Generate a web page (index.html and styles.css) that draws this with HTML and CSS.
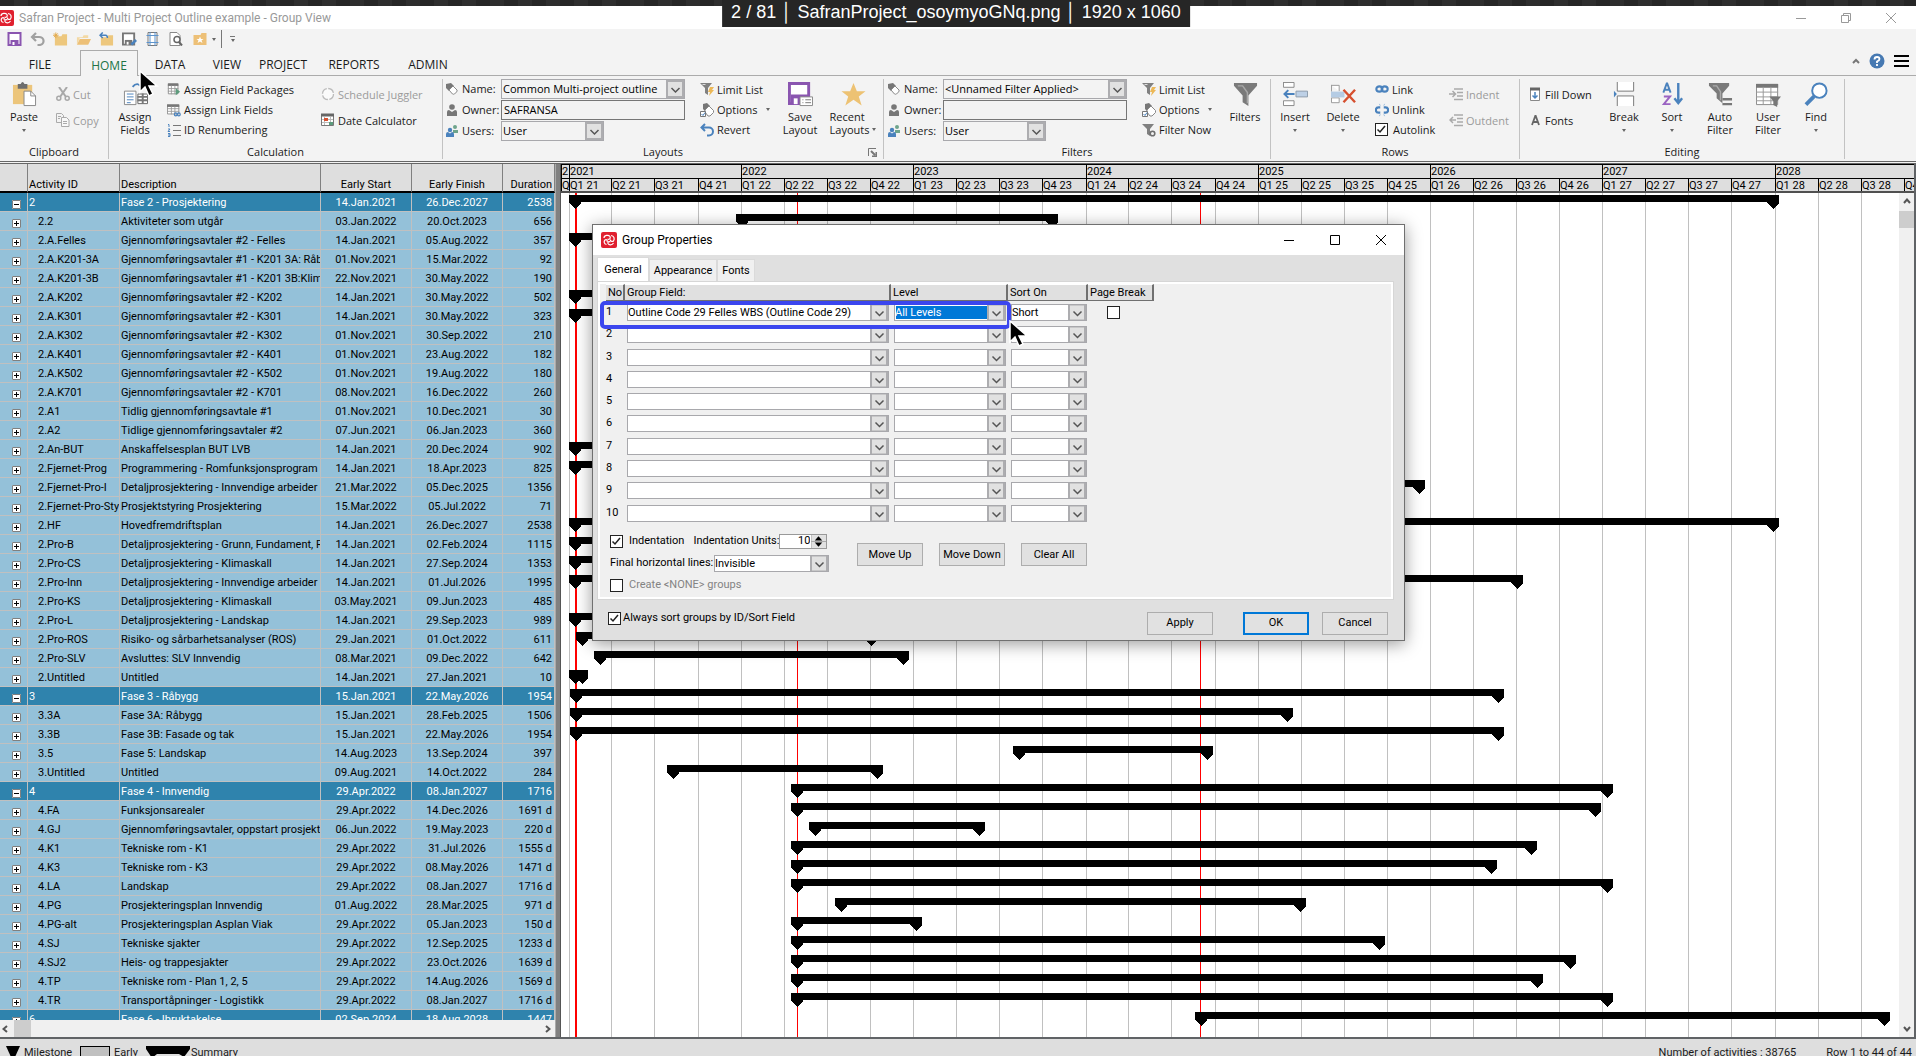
FILE: index.html
```html
<!DOCTYPE html>
<html lang="en">
<head>
<meta charset="utf-8">
<title>Safran Project - Multi Project Outline example - Group View</title>
<link rel="stylesheet" href="styles.css">
</head>
<body>
<svg class="sprite" aria-hidden="true">
  <symbol id="logo" viewBox="0 0 16 16"><rect width="16" height="16" rx="2" fill="#e0202f"/><g fill="none" stroke="#fff" stroke-width="1.200"><path d="M3 6C3 3 7.500 2.500 9 4.500C10 6.500 8 8 6.500 7"/><path d="M10 3.500C13 4 14 6.500 12.500 9C11 10 9 9 9.500 7.500"/><path d="M12.500 11C11 13.500 8 13.500 7 11.500C6.500 10 8 9 9.500 10"/><path d="M5.500 12.500C3 12 2.500 9.500 4 8C5.500 7 7 8.500 6 10"/></g></symbol>
  <symbol id="save" viewBox="0 0 14 14"><path d="M1 1h12v12H1z" fill="#fff" stroke="#8a55b0" stroke-width="2"/><path d="M3 8h8v5H3z" fill="#8a55b0"/><path d="M5 10h2v3H5z" fill="#fff"/></symbol>
  <symbol id="undo" viewBox="0 0 14 14"><path d="M5.500 1L1.500 5l4 4M2 5h6.500a4 3.500 0 0 1 0 8H7" fill="none" stroke="#a0a0a0" stroke-width="2.200"/></symbol>
  <symbol id="folder-new" viewBox="0 0 16 14"><path d="M2 4h7l1-2h5v12H2z" fill="#edc77d"/><path d="M3 0v6M0 3h6M1 1l4 4M5 1L1 5" stroke="#e2a94a"/></symbol>
  <symbol id="folder-open" viewBox="0 0 16 14"><path d="M1 13V5h6l1-2h5v3H4z" fill="#f3d9a4"/><path d="M4 7h12l-3 6H1z" fill="#edc077"/></symbol>
  <symbol id="folder-back" viewBox="0 0 16 14"><path d="M2 5h7l1-2h5v11H2z" fill="#edc77d"/><path d="M4 0L1 3l3 3M1 3h6q2 0 2 3" fill="none" stroke="#4a82bd" stroke-width="1.600"/></symbol>
  <symbol id="save-as" viewBox="0 0 16 14"><path d="M1 1h12v12H1z" fill="#fff" stroke="#767676" stroke-width="2"/><path d="M3 8h8v5H3z" fill="#767676"/><path d="M5 10h2v3H5z" fill="#fff"/><path d="M9 12l5-5 2 2-5 5z" fill="#4a82bd"/></symbol>
  <symbol id="page-setup" viewBox="0 0 14 14"><path d="M2.500.5h9v13h-9z" fill="#fff" stroke="#777"/><path d="M4.500 0v14M9.500 0v14M1 3.500h12M1 10.500h12" stroke="#5c93cc"/></symbol>
  <symbol id="preview" viewBox="0 0 14 14"><path d="M1.500.5h7l3 3v10h-10z" fill="#fff" stroke="#888"/><circle cx="8.500" cy="7.500" r="3" fill="#fff" stroke="#666" stroke-width="1.500"/><path d="M10.500 10l3 3.500" stroke="#666" stroke-width="2"/></symbol>
  <symbol id="folder-star" viewBox="0 0 14 14"><path d="M0 3h7l1-2h5v12H0z" fill="#edc077"/><path d="M6.500 4.500l1 2.500h2.500l-2 1.500 1 2.500-2.500-1.500L4 11l1-2.500L3 7h2.500z" fill="#fff"/></symbol>
  <symbol id="paste" viewBox="0 0 26 26"><path d="M1 3h20v20H1z" fill="#ecc57b"/><path d="M6 2h3q2-4 4 0h3v5H6z" fill="#6e6e6e"/><path d="M12.500 9.500h7l5 5v10h-12z" fill="#fff" stroke="#888"/><path d="M19.500 9.500v5h5" fill="none" stroke="#888"/></symbol>
  <symbol id="cut" viewBox="0 0 14 14"><path d="M3 0l7 10M11 0L4 10" stroke="#a8a8a8" stroke-width="2"/><circle cx="2.800" cy="11.200" r="2" fill="none" stroke="#a8a8a8" stroke-width="1.500"/><circle cx="11.200" cy="11.200" r="2" fill="none" stroke="#a8a8a8" stroke-width="1.500"/></symbol>
  <symbol id="copy" viewBox="0 0 14 14"><path d="M.5.500h5l2 2v7h-7z" fill="#f3f3f3" stroke="#aaa"/><path d="M5.500 4.500h5l2.500 2.500v6.500H5.500z" fill="#f8f8f8" stroke="#aaa"/><path d="M2 3.500h3M2 5.500h2M7 8.500h4M7 10.500h4" stroke="#aaa"/></symbol>
  <symbol id="assign" viewBox="0 0 26 26"><path d="M1.500 9.500h12v14h-12z" fill="#fff" stroke="#888"/><path d="M4 12.500h7M4 15.500h7M4 18.500h7M4 21.500h4" stroke="#4a82bd"/><path d="M15.500 12.500h10v10h-10z" fill="#fff" stroke="#666"/><path d="M15 15.500h11M20.500 12v11M15 19h11" stroke="#777" stroke-width="2"/><path d="M10 5q5-6 10 1" fill="none" stroke="#4a82bd" stroke-width="2"/></symbol>
  <symbol id="table-go" viewBox="0 0 16 14"><path d="M1.500 1.500h11v11h-11z" fill="#fff" stroke="#888"/><path d="M1 2h12" stroke="#777" stroke-width="3"/><path d="M1 6.500h12M1 9.500h12M5 3v10M9 3v10" stroke="#999"/><path d="M10 6l5 4-5 4z" fill="#5c9b7c"/></symbol>
  <symbol id="table-link" viewBox="0 0 16 14"><path d="M.5 1.500h13v10H.5z" fill="#fff" stroke="#888"/><path d="M0 2h14" stroke="#777" stroke-width="3"/><path d="M0 5.500h14M0 8.500h14M5 3v9M9 3v9" stroke="#999"/><g fill="none" stroke="#4a82bd" stroke-width="1.400"><circle cx="10" cy="12" r="1.600"/><circle cx="13.500" cy="12" r="1.600"/></g></symbol>
  <symbol id="numbering" viewBox="0 0 14 14"><path d="M6 2.500h8M6 7.500h8M6 12.500h8" stroke="#777"/><path d="M1 1.500h1V4M1 6h2L1 8.500h2M1 10.500h2v3H1M3 12H1" fill="none" stroke="#4a82bd"/></symbol>
  <symbol id="juggle" viewBox="0 0 14 14"><circle cx="7" cy="7" r="5.500" fill="#fafafa" stroke="#bbb" stroke-width="1.300" stroke-dasharray="7 1.500"/></symbol>
  <symbol id="calendar" viewBox="0 0 14 14"><path d="M.5 1.500h12v11H.5z" fill="#fff" stroke="#777"/><path d="M0 2h13" stroke="#666" stroke-width="3"/><path d="M3.500 4v8M9.500 4v8M1 6.500h11M1 9.500h11" stroke="#bbb"/><path d="M3 5h4v3H3z" fill="#d6502f"/><path d="M8 9h4v3H8z" fill="#5c9b7c"/></symbol>
  <symbol id="tag" viewBox="0 0 12 12"><path d="M0 1l5-1 3 3-5 5-3-3z" fill="#777"/><path d="M7 3l4 4q.5 1-.5 2L8.500 11q-1 .5-2 0L3 7z" fill="#fff" stroke="#888"/></symbol>
  <symbol id="user" viewBox="0 0 12 12"><circle cx="6" cy="3" r="2.800" fill="#777"/><path d="M1 12V8q0-2 2-2l3 2 3-2q2 0 2 2v4z" fill="#777"/></symbol>
  <symbol id="users" viewBox="0 0 12 12"><circle cx="9" cy="2" r="2" fill="#6fa58c"/><path d="M7 8V5h5v3z" fill="#6fa58c"/><circle cx="4" cy="5" r="2.200" fill="#4a82bd"/><path d="M0 12V9q0-2 2-2l2 1.500L6 7q2 0 2 2v3z" fill="#4a82bd"/></symbol>
  <symbol id="limit" viewBox="0 0 14 14"><path d="M0 1h12L8 6v7l-3-2V6z" fill="#808080"/><path d="M2.500 2.500h3" stroke="#ddd"/><path d="M10 5h4l-2 3h2l-5 6 1-4H8z" fill="#ecb857"/></symbol>
  <symbol id="filter-now" viewBox="0 0 14 14"><path d="M0 1h12L8 6v7l-3-2V6z" fill="#808080"/><circle cx="10.500" cy="10.500" r="2.300" fill="#f3f3f3" stroke="#707070" stroke-width="1.600"/></symbol>
  <symbol id="options" viewBox="0 0 14 14"><path d="M3 1l4-1 3 3-5 5-2-2z" fill="#777"/><path d="M9 3l4.500 4.500v2L10 13H8L5 9V7z" fill="#fff" stroke="#888"/><path d="M.5 8.500h5v5h-5z" fill="#fff" stroke="#777"/><path d="M1.500 11l1.500 1.500 2-3" fill="none" stroke="#4a82bd"/></symbol>
  <symbol id="revert" viewBox="0 0 14 14"><path d="M5 1L1.500 4.500 5 8M2 4.500h7a3.500 3.500 0 0 1 0 8H7" fill="none" stroke="#4a82bd" stroke-width="2"/></symbol>
  <symbol id="save-layout" viewBox="0 0 26 26"><path d="M1.500 1.500h20v21h-20z" fill="#fff" stroke="#8a55b0" stroke-width="3"/><path d="M3 13h18v10H3z" fill="#8a55b0"/><path d="M6 17h4v6H6z" fill="#fff"/><path d="M12.500 15.500h13v9h-13z" fill="#fff" stroke="#888"/><path d="M15 18.500h1M18 18.500h6M15 21.500h1M18 21.500h6" stroke="#777"/></symbol>
  <symbol id="star" viewBox="0 0 26 26"><path d="M13 1l3.500 8.500h9l-7 5.500 3 9.500L13 18.500 4.500 24.500l3-9.500-7-5.500h9z" fill="#edc273"/></symbol>
  <symbol id="funnel" viewBox="0 0 26 26"><path d="M1 1h24v3L16 14v11l-6-4v-7L1 4z" fill="#7a7a7a"/><path d="M5 4h5l5 7v11" fill="none" stroke="#a8a8a8" stroke-width="1.500"/></symbol>
  <symbol id="insert" viewBox="0 0 26 26"><path d="M.5.500h11v5M.5 0v5.500h11M.5 24.500v-5h11v5z" fill="#fff" stroke="#888"/><path d="M13.500 9.500h12v6h-12z" fill="#bdd0e6" stroke="#8d9bab"/><path d="M12 12.500H2M5.500 8.500l-4 4 4 4" fill="none" stroke="#4a82bd" stroke-width="2"/></symbol>
  <symbol id="delete" viewBox="0 0 26 26"><path d="M.5 3.500h8v6M.5 3v7M.5 21.500v-5h8v5z" fill="#fff" stroke="#999"/><path d="M0 10h14v6H0z" fill="#b5cce4"/><path d="M13 8l12 13M25 8L13 21" stroke="#d6502f" stroke-width="2.500"/></symbol>
  <symbol id="link" viewBox="0 0 16 14"><g fill="none" stroke="#4a82bd" stroke-width="2.400"><ellipse cx="5" cy="7" rx="3.500" ry="3"/><ellipse cx="11" cy="7" rx="3.500" ry="3"/></g></symbol>
  <symbol id="unlink" viewBox="0 0 16 14"><path d="M6 4H4a3 3 0 0 0 0 6h2M10 4h2a3 3 0 0 1 0 6h-2" fill="none" stroke="#4a82bd" stroke-width="2.400"/><path d="M5 0l1 2M11 0l-1 2M5 14l1-2M11 14l-1-2" stroke="#8db4dc"/></symbol>
  <symbol id="indent" viewBox="0 0 14 14"><path d="M5 2h9M8 5.500h6M8 9h6M5 12.500h9" stroke="#aaa" stroke-width="1.500"/><path d="M0 7h6M3.500 4l3 3-3 3" fill="none" stroke="#aaa" stroke-width="1.500"/></symbol>
  <symbol id="outdent" viewBox="0 0 14 14"><path d="M5 2h9M8 5.500h6M8 9h6M5 12.500h9" stroke="#aaa" stroke-width="1.500"/><path d="M1 7h6M4 4L1 7l3 3" fill="none" stroke="#aaa" stroke-width="1.500"/></symbol>
  <symbol id="fill-down" viewBox="0 0 14 14"><path d="M2.500 1.500h9v12h-9z" fill="#fff" stroke="#888"/><path d="M2 2h10" stroke="#666" stroke-width="3"/><path d="M7 5v6M4.500 8.500L7 11l2.500-2.500" fill="none" stroke="#4a82bd" stroke-width="1.500"/></symbol>
  <symbol id="fonts" viewBox="0 0 14 14"><path d="M4 12L7.300 3h.4L11 12M5 9h5" fill="none" stroke="#666" stroke-width="1.800"/></symbol>
  <symbol id="break" viewBox="0 0 26 26"><path d="M5.500 0v9.500h17V0" fill="#fff" stroke="#777"/><path d="M5.500 25V14.500h17V25" fill="#fff" stroke="#777"/><path d="M2 9l3 3.500L2 16z" fill="#4a82bd"/></symbol>
  <symbol id="sort" viewBox="0 0 26 26"><path d="M3.500 11L7 1.500h.5L11 11M5 8h5" fill="none" stroke="#4a82bd" stroke-width="2"/><path d="M4 15h6.500L4 23h7" fill="none" stroke="#9a63c2" stroke-width="2"/><path d="M19 1v21M15 17l4 5 4-5" fill="none" stroke="#4a82bd" stroke-width="2.500"/></symbol>
  <symbol id="auto-filter" viewBox="0 0 26 26"><path d="M1 1h21v3l-7 8v10l-6-5v-5L1 4z" fill="#7a7a7a"/><path d="M5 4h4l4 6v9" fill="none" stroke="#aaa" stroke-width="1.500"/><path d="M15 18h10M15 23h10" stroke="#777" stroke-width="2.500"/></symbol>
  <symbol id="user-filter" viewBox="0 0 26 26"><path d="M.5 2.500h22v21H.5z" fill="#fff" stroke="#888"/><path d="M0 4h23" stroke="#777" stroke-width="4"/><path d="M0 10.500h23M0 15.500h23M0 19.500h23M7.500 5v18M15.500 5v18" stroke="#999"/><path d="M14 15h12l-4 5v6l-4-2v-4z" fill="#777"/></symbol>
  <symbol id="find" viewBox="0 0 26 26"><circle cx="16" cy="9" r="7.500" fill="#fff" stroke="#4a82bd" stroke-width="2"/><path d="M10.500 15L2 23.500" stroke="#4a82bd" stroke-width="4"/></symbol>
  <symbol id="cursor" viewBox="0 0 20 28"><path d="M1 1v21l5-5 4 9 4-2-4-8h8z" fill="#000" stroke="#fff" stroke-width="1.500"/></symbol>
  <symbol id="win-min" viewBox="0 0 10 10"><path d="M0 5.500h10" stroke="currentColor"/></symbol>
  <symbol id="win-restore" viewBox="0 0 10 10"><path d="M.5 2.500h7v7h-7zM2.500 2.500v-2h7v7h-2" fill="none" stroke="currentColor"/></symbol>
  <symbol id="win-max" viewBox="0 0 10 10"><path d="M.5.500h9v9h-9z" fill="none" stroke="currentColor"/></symbol>
  <symbol id="win-close" viewBox="0 0 10 10"><path d="M0 0l10 10M10 0L0 10" stroke="currentColor"/></symbol>
</svg>

<div class="strip"></div>
<div class="caption">2 / 81 │ SafranProject_osoymyoGNq.png │ 1920 x 1060</div>

<header class="titlebar">
  <svg class="i16"><use href="#logo"/></svg>
  <h1>Safran Project - Multi Project Outline example - Group View</h1>
  <div class="winctl">
    <button aria-label="Minimize"><svg><use href="#win-min"/></svg></button>
    <button aria-label="Restore"><svg><use href="#win-restore"/></svg></button>
    <button aria-label="Close"><svg><use href="#win-close"/></svg></button>
  </div>
</header>

<div class="quick">
  <button aria-label="Save"><svg><use href="#save"/></svg></button>
  <button aria-label="Undo"><svg><use href="#undo"/></svg></button>
  <button aria-label="New"><svg><use href="#folder-new"/></svg></button>
  <button aria-label="Open"><svg><use href="#folder-open"/></svg></button>
  <button aria-label="Reopen"><svg><use href="#folder-back"/></svg></button>
  <button aria-label="Save as"><svg><use href="#save-as"/></svg></button>
  <button aria-label="Page setup"><svg><use href="#page-setup"/></svg></button>
  <button aria-label="Print preview"><svg><use href="#preview"/></svg></button>
  <button class="split" aria-label="Favourites"><svg><use href="#folder-star"/></svg><i class="caret"></i></button>
  <button class="more" aria-label="Customize"><i class="bar"></i><i class="caret"></i></button>
</div>

<nav class="tabs">
  <button class="t-file">FILE</button>
  <button class="t-home on">HOME</button>
  <button class="t-data">DATA</button>
  <button class="t-view">VIEW</button>
  <button class="t-project">PROJECT</button>
  <button class="t-reports">REPORTS</button>
  <button class="t-admin">ADMIN</button>
  <div class="tabtools">
    <button aria-label="Collapse ribbon"><svg width="8" height="8" viewBox="0 0 8 8"><path d="M1 6l3-3 3 3" fill="none" stroke="#777" stroke-width="2"/></svg></button>
    <button aria-label="Help"><svg width="16" height="16" viewBox="0 0 16 16"><circle cx="8" cy="8" r="7.500" fill="#4679b2"/><path d="M5.500 6.500Q5.500 4 8 4t2.500 2Q10.500 7.500 8 8.500v1.500M8 11v2" fill="none" stroke="#fff" stroke-width="1.800"/></svg></button>
    <button aria-label="Menu"><svg width="15" height="12" viewBox="0 0 15 12"><path d="M0 1h15M0 6h15M0 11h15" stroke="#000" stroke-width="2"/></svg></button>
  </div>
</nav>

<section class="ribbon">
  <div class="group g-clip">
    <div class="body">
      <button class="big"><svg><use href="#paste"/></svg>Paste<i class="caret"></i></button>
      <div class="list two">
        <button class="small" disabled><svg><use href="#cut"/></svg>Cut</button>
        <button class="small" disabled><svg><use href="#copy"/></svg>Copy</button>
      </div>
    </div>
    <h2>Clipboard</h2>
  </div>
  <div class="group g-calc">
    <div class="body">
      <button class="big"><svg><use href="#assign"/></svg>Assign<br>Fields</button>
      <div class="list">
        <button class="small"><svg><use href="#table-go"/></svg>Assign Field Packages</button>
        <button class="small"><svg><use href="#table-link"/></svg>Assign Link Fields</button>
        <button class="small"><svg><use href="#numbering"/></svg>ID Renumbering</button>
      </div>
      <div class="list two">
        <button class="small" disabled><svg><use href="#juggle"/></svg>Schedule Juggler</button>
        <button class="small"><svg><use href="#calendar"/></svg>Date Calculator</button>
      </div>
    </div>
    <h2>Calculation</h2>
  </div>
  <div class="group g-layout">
    <div class="body">
      <div class="form">
        <label for="lname"><svg><use href="#tag"/></svg>Name:</label><select id="lname" class="combo"><option>Common Multi-project outline</option></select>
        <label for="lowner"><svg><use href="#user"/></svg>Owner:</label><input id="lowner" value="SAFRANSA">
        <label for="lusers"><svg><use href="#users"/></svg>Users:</label><select id="lusers" class="combo short"><option>User</option></select>
      </div>
      <div class="list">
        <button class="small"><svg><use href="#limit"/></svg>Limit List</button>
        <button class="small"><svg><use href="#options"/></svg>Options<i class="caret"></i></button>
        <button class="small"><svg><use href="#revert"/></svg>Revert</button>
      </div>
      <button class="big"><svg><use href="#save-layout"/></svg>Save<br>Layout</button>
      <button class="big"><svg><use href="#star"/></svg><span class="recent">Recent<span class="with-caret">Layouts<i class="caret"></i></span></span></button>
    </div>
    <h2>Layouts</h2>
    <svg class="launcher" viewBox="0 0 9 9"><path d="M.5 8V.5H8" fill="none" stroke="#777"/><path d="M3 3l4 4M8.500 4v4.500H4" fill="none" stroke="#777" stroke-width="2"/></svg>
  </div>
  <div class="group g-filter">
    <div class="body">
      <div class="form">
        <label for="fname"><svg><use href="#tag"/></svg>Name:</label><select id="fname" class="combo"><option>&lt;Unnamed Filter Applied&gt;</option></select>
        <label for="fowner"><svg><use href="#user"/></svg>Owner:</label><input id="fowner" value="">
        <label for="fusers"><svg><use href="#users"/></svg>Users:</label><select id="fusers" class="combo short"><option>User</option></select>
      </div>
      <div class="list">
        <button class="small"><svg><use href="#limit"/></svg>Limit List</button>
        <button class="small"><svg><use href="#options"/></svg>Options<i class="caret"></i></button>
        <button class="small"><svg><use href="#filter-now"/></svg>Filter Now</button>
      </div>
      <button class="big"><svg><use href="#funnel"/></svg>Filters</button>
    </div>
    <h2>Filters</h2>
  </div>
  <div class="group g-rows">
    <div class="body">
      <button class="big"><svg><use href="#insert"/></svg>Insert<i class="caret"></i></button>
      <button class="big"><svg><use href="#delete"/></svg>Delete<i class="caret"></i></button>
      <div class="list">
        <button class="small"><svg><use href="#link"/></svg>Link</button>
        <button class="small"><svg><use href="#unlink"/></svg>Unlink</button>
        <label class="small"><input type="checkbox" checked>Autolink</label>
      </div>
      <div class="list two">
        <button class="small" disabled><svg><use href="#indent"/></svg>Indent</button>
        <button class="small" disabled><svg><use href="#outdent"/></svg>Outdent</button>
      </div>
    </div>
    <h2>Rows</h2>
  </div>
  <div class="group g-edit">
    <div class="body">
      <div class="list two">
        <button class="small"><svg><use href="#fill-down"/></svg>Fill Down</button>
        <button class="small"><svg><use href="#fonts"/></svg>Fonts</button>
      </div>
      <button class="big"><svg><use href="#break"/></svg>Break<i class="caret"></i></button>
      <button class="big"><svg><use href="#sort"/></svg>Sort<i class="caret"></i></button>
      <button class="big"><svg><use href="#auto-filter"/></svg>Auto<br>Filter</button>
      <button class="big"><svg><use href="#user-filter"/></svg>User<br>Filter</button>
      <button class="big"><svg><use href="#find"/></svg>Find<i class="caret"></i></button>
    </div>
    <h2>Editing</h2>
  </div>
</section>

<main class="workspace">
  <section class="left">
    <div class="tablewrap">
      <table>
        <colgroup><col class="c-exp"><col class="c-id"><col class="c-desc"><col class="c-start"><col class="c-finish"><col class="c-dur"></colgroup>
        <thead><tr><th></th><th>Activity ID</th><th>Description</th><th class="mid">Early Start</th><th class="mid">Early Finish</th><th class="num">Duration</th></tr></thead>
        <tbody id="rows"></tbody>
      </table>
    </div>
    <div class="hscroll">
      <svg viewBox="0 0 6 8"><path d="M5 1L1.500 4 5 7" fill="none" stroke="#555" stroke-width="2"/></svg>
      <div class="hthumb"></div>
      <svg viewBox="0 0 6 8"><path d="M1 1l3.500 3L1 7" fill="none" stroke="#555" stroke-width="2"/></svg>
    </div>
  </section>
  <div class="splitter"></div>
  <section class="chart">
    <div class="scale">
      <div class="years" id="years"></div>
      <div class="quarters" id="quarters"></div>
    </div>
    <div class="plotrow">
      <div class="plot"><svg id="plot" shape-rendering="crispEdges"></svg></div>
      <div class="vscroll">
        <svg viewBox="0 0 8 6"><path d="M1 5l3-3.500L7 5" fill="none" stroke="#555" stroke-width="2"/></svg>
        <div class="vthumb"></div>
        <svg viewBox="0 0 8 6"><path d="M1 1l3 3.500L7 1" fill="none" stroke="#555" stroke-width="2"/></svg>
      </div>
    </div>
  </section>
</main>

<footer class="status">
  <svg width="14" height="12" viewBox="0 0 14 12"><path d="M0 0h14l-5 11H5z"/></svg><span class="s-mile">Milestone</span>
  <i class="early"></i><span class="s-early">Early</span>
  <svg width="44" height="12" viewBox="0 0 44 12"><path d="M0 0h44v3l-6 8-5-3H11L6 12 0 3z"/></svg><span class="s-sum">Summary</span>
  <span class="count">Number of activities : 38765</span><span>Row 1 to 44 of 44</span>
</footer>

<div class="dialog" role="dialog" aria-label="Group Properties">
  <div class="dtitle">
    <svg class="i16"><use href="#logo"/></svg><h2>Group Properties</h2>
    <div class="dctl">
      <button aria-label="Minimize"><svg><use href="#win-min"/></svg></button>
      <button aria-label="Maximize"><svg><use href="#win-max"/></svg></button>
      <button aria-label="Close"><svg><use href="#win-close"/></svg></button>
    </div>
  </div>
  <div class="dtabs"><button class="on">General</button><button class="d-app">Appearance</button><button class="d-font">Fonts</button></div>
  <div class="pane">
    <div class="ghead"><span>No</span><span>Group Field:</span><span>Level</span><span>Sort On</span><span>Page Break</span></div>
    <div class="grows" id="grows"></div>
    <div class="lower">
      <div class="opts">
        <div class="line"><label class="chk"><input type="checkbox" checked>Indentation</label><label for="units">Indentation Units:</label><span class="spin"><input id="units" value="10"><svg viewBox="0 0 14 12"><path d="M0 0h14v12H0z" fill="#e1e1e1"/><path d="M0 6h14M0 0v12" stroke="#aaa"/><path d="M7 1l3.500 4h-7zM7 11l3.500-4h-7z"/></svg></span></div>
        <div class="line"><label for="lines">Final horizontal lines:</label><select id="lines" class="combo"><option>Invisible</option></select></div>
        <div class="line"><label class="chk off"><input type="checkbox">Create &lt;NONE&gt; groups</label></div>
      </div>
      <div class="moves"><button class="btn">Move Up</button><button class="btn">Move Down</button><button class="btn">Clear All</button></div>
    </div>
  </div>
  <div class="dfoot">
    <label class="chk tight"><input type="checkbox" checked>Always sort groups by ID/Sort Field</label>
    <button class="btn apply">Apply</button><button class="btn ok">OK</button><button class="btn">Cancel</button>
  </div>
  <div class="marker"></div>
  <svg class="cursor c2"><use href="#cursor"/></svg>
</div>
<svg class="cursor c1"><use href="#cursor"/></svg>
<script src="app.js"></script>
</body>
</html>
```
FILE: styles.css
```css
* { box-sizing: border-box; }
html, body { height: 100%; }
body { margin: 0; display: flex; flex-direction: column; overflow: hidden; background: #f3f3f3; color: #1a1a1a; font: 11px/13px "Open Sans", "Noto Sans", sans-serif; position: relative; }
button, input, select { font: inherit; color: inherit; margin: 0; padding: 0; border: 0; background: none; border-radius: 0; }
button { display: flex; align-items: center; white-space: nowrap; }
h1, h2 { margin: 0; font: inherit; }
svg { display: block; flex: none; }
.sprite { position: absolute; width: 0; height: 0; }
.i16 { width: 16px; height: 16px; }
.caret { width: 0; height: 0; border: 2px solid transparent; border-top: 3px solid #666; border-bottom: 0; }
input[type=checkbox] { appearance: none; width: 13px; height: 13px; border: 1px solid #222; background: #fff; flex: none; }
input[type=checkbox]:checked { background: #fff url("data:image/svg+xml,%3Csvg xmlns='http://www.w3.org/2000/svg' width='11' height='11'%3E%3Cpath d='M1.500 5.500l2.500 2.500 5-6' fill='none' stroke='%23222' stroke-width='1.500'/%3E%3C/svg%3E") center no-repeat; }
.combo { appearance: none; border: 1px solid #a8a8ac; background: url("data:image/svg+xml,%3Csvg xmlns='http://www.w3.org/2000/svg' width='18' height='18'%3E%3Cpath d='M1 1h16v16H1z' fill='%23e1e1e1' stroke='%23adadb0' stroke-width='2'/%3E%3Cpath d='M5.500 8l4 4 4-4' fill='none' stroke='%23555' stroke-width='1.500'/%3E%3C/svg%3E") right center no-repeat; }

.strip { height: 6px; background: repeating-linear-gradient(90deg, #262626 0 14px, #2e2e2e 14px 28px); }
.caption { position: absolute; top: 0; left: 50%; transform: translateX(-50%); margin-left: -2px; height: 27px; padding: 0 9px; background: #262626; color: #fff; font: 18px/24px "Liberation Sans", Arial, sans-serif; white-space: nowrap; }
.titlebar { height: 23px; display: flex; align-items: center; background: #fff; color: #999; }
.titlebar .i16 { margin-left: -2px; margin-right: 5px; }
.titlebar h1 { font: 12px/16px Roboto, sans-serif; }
.winctl { margin-left: auto; display: flex; }
.winctl button { width: 45px; height: 23px; justify-content: center; }
.winctl svg, .dctl svg { width: 10px; height: 10px; }
.winctl button:last-child { margin-right: 3px; }

.quick { height: 20px; display: flex; align-items: center; padding-left: 2px; }
.quick button { width: 24px; height: 20px; justify-content: center; margin-right: -1px; }
.quick svg { width: 15px; height: 14px; }
.quick .split { width: 36px; gap: 4px; }
.quick .more { width: 22px; height: 18px; flex-direction: column; gap: 2px; border-left: 1px solid #777; }
.bar { width: 5px; height: 1px; background: #777; }

.tabs { height: 27px; display: flex; align-items: flex-end; border-bottom: 1px solid #ababab; }
.tabs > button { height: 25px; padding-top: 4px; justify-content: center; font-size: 12px; }
.t-file { width: 80px; }
.t-home { width: 58px; }
.t-data { width: 64px; }
.t-view { width: 50px; }
.t-project { width: 62px; }
.t-reports { width: 80px; }
.t-admin { width: 68px; }
.tabs .on { color: #217346; border: 1px solid #ababab; border-bottom: 0; background: #f3f3f3; margin-bottom: -1px; height: 26px; }
.tabtools { margin-left: auto; display: flex; align-items: center; gap: 9px; padding: 0 7px 6px 0; }

.ribbon { display: flex; height: 88px; padding: 3px 0 2px; border-bottom: 3px double #666; }
.group { position: relative; border-right: 1px solid #c2c2c2; display: flex; flex-direction: column; flex: none; }
.group h2 { text-align: center; line-height: 14px; }
.body { display: flex; height: 68px; }
.g-clip { width: 109px; }
.g-calc { width: 334px; }
.g-layout { width: 441px; }
.g-filter { width: 387px; }
.g-rows { width: 249px; }
.g-edit { width: 325px; }
.big, .list { flex: none; }
.big { flex-direction: column; width: 48px; padding-top: 3px; line-height: 13px; white-space: normal; text-align: center; }
.big svg { width: 25px; height: 25px; margin-bottom: 3px; }
.big > .caret { margin-top: 6px; }
.recent { text-align: left; }
.with-caret { display: flex; align-items: center; gap: 3px; white-space: nowrap; }
.list { display: grid; grid-template-rows: 20px 21px 19px; align-items: center; align-content: start; }
.list.two { grid-template-rows: 26px 26px; padding-top: 2px; }
.small { display: flex; align-items: center; gap: 3px; white-space: nowrap; }
.small svg { width: 14px; height: 14px; }
.small .caret { margin-left: 5px; }
.small:disabled { color: #9b9b9b; }
.g-clip .big { margin-right: 8px; }
.g-calc .big { margin-left: 2px; margin-right: 8px; }
.g-calc .list { width: 154px; }
.g-calc .two { width: 108px; }
.form { display: grid; grid-template-columns: 55px 184px; grid-auto-rows: 20px; row-gap: 1px; margin-left: 3px; align-content: start; }
.form label { display: flex; align-items: center; gap: 4px; padding-bottom: 1px; }
.form svg { width: 12px; height: 12px; }
.form input, .form select { padding: 0 1px 2px; color: #000; min-width: 0; }
.form input { border: 1px solid #767676; padding: 0 2px 2px; }
.form .short { width: 103px; }
.form + .list { margin-left: 15px; width: 76px; }
.g-layout .big:last-child { width: 58px; }
.g-filter .big { margin-left: 3px; }
.g-filter .form { margin-left: 4px; }
.launcher { position: absolute; right: 6px; bottom: 2px; width: 9px; height: 9px; }
.g-rows .list { width: 66px; margin-left: 8px; }
.g-rows label { gap: 5px; }
.g-edit .list { width: 72px; margin-left: 8px; }

.workspace { flex: 1; display: flex; min-height: 0; border-bottom: 2px solid #606366; font: 11px/16px Roboto, "Liberation Sans", sans-serif; color: #000; }
.left { width: 555px; display: flex; flex-direction: column; min-height: 0; }
.tablewrap { flex: 1; overflow: hidden; min-height: 0; }
table { width: 555px; table-layout: fixed; border-collapse: separate; border-spacing: 0; }
.c-exp { width: 28px; }
.c-id { width: 92px; }
.c-desc { width: 201px; }
.c-start { width: 91px; }
.c-finish { width: 91px; }
.c-dur { width: 52px; }
th, td { padding: 0 1px; text-align: left; font-weight: normal; overflow: hidden; white-space: nowrap; border-right: 1px solid #c0c0c0; }
th { height: 29px; padding-top: 15px; line-height: 12px; background: #dedede; border-right-color: #808080; border-bottom: 2px solid #000; }
td { height: 19px; padding-top: 2px; background: #94c1d9; border-bottom: 1px solid #c0c0c0; }
.phase td { background: #2f83ad; color: #fff; }
.child td:nth-child(2) { padding-left: 10px; }
th.mid, td.mid { text-align: center; }
th.num, td.num { text-align: right; padding-right: 2px; }
.exp { width: 9px; height: 9px; margin: 2px 0 0 11px; background: #fff; }
.hscroll { height: 17px; display: flex; align-items: center; background: #f0f0f0; padding: 0 4px 0 2px; }
.hscroll svg { width: 6px; height: 8px; }
.hthumb { width: 17px; height: 17px; background: #cdcdcd; margin-left: 6px; margin-right: auto; }
.splitter { width: 6px; background: #808080; border-right: 1px solid #555; border-left: 1px solid #aaa; }
.chart { flex: 1; min-width: 0; display: flex; flex-direction: column; border-right: 2px solid #606366; }
.scale { height: 29px; overflow: hidden; background: #dedede; border-bottom: 2px solid #505050; }
.years, .quarters { display: flex; height: 14px; line-height: 14px; border-top: 1px solid #000; }
.years span, .quarters span { flex: none; overflow: hidden; white-space: nowrap; border-left: 1px solid #000; }
.plotrow { flex: 1; display: flex; min-height: 0; background: #fff; }
.plot { flex: 1; min-width: 0; overflow: hidden; }
.plot svg { width: 100%; height: 100%; }
.vscroll { width: 15px; background: #f0f0f0; display: flex; flex-direction: column; align-items: center; padding: 5px 0; }
.vscroll svg { width: 8px; height: 6px; }
.vthumb { width: 15px; height: 17px; background: #cdcdcd; margin-top: 7px; margin-bottom: auto; }

.status { height: 17px; overflow: hidden; display: flex; align-items: flex-start; padding: 7px 4px 0 6px; background: #dedede; font: 11px/13px Roboto, "Liberation Sans", sans-serif; white-space: nowrap; flex: none; }
.status span { padding-left: 4px; flex: none; }
.status .s-mile { width: 60px; }
.early { width: 30px; height: 16px; border: 1px solid #000; background: #c0c0c0; flex: none; }
.status .s-early { width: 36px; }
.status .s-sum { padding-left: 1px; }
.status .count { margin-left: auto; margin-right: 26px; }

.dialog { position: absolute; left: 592px; top: 224px; width: 813px; height: 417px; display: flex; flex-direction: column; background: #e0e0e0; border: 1px solid #707070; box-shadow: 0 3px 16px rgba(0,0,0,.4); font: 11px/16px Roboto, "Liberation Sans", sans-serif; color: #000; }
.dtitle { height: 30px; display: flex; align-items: center; gap: 5px; padding-left: 8px; background: #fff; }
.dtitle h2 { font-size: 12px; }
.dctl { display: flex; margin-left: auto; }
.dctl button { width: 46px; height: 30px; justify-content: center; }
.dtabs { display: flex; align-items: flex-end; height: 26px; padding-left: 4px; }
.dtabs button { height: 22px; justify-content: center; background: #f0f0f0; border: 1px solid #dadada; border-bottom: 0; }
.dtabs .on { width: 52px; height: 24px; background: #fff; }
.dtabs .d-app { width: 68px; }
.dtabs .d-font { width: 38px; }
.pane { margin: 0 10px 0 4px; height: 319px; padding: 0 6px; background: #f0f0f0; border: 3px solid #fff; outline: 1px solid #d6d6d6; outline-offset: -1px; }
.ghead { display: grid; grid-template-columns: 19px 266px 117px 80px 66px; height: 17px; }
.ghead span { background: #e0e0e0; padding-left: 2px; border-right: 2px solid #707070; border-bottom: 1px solid #707070; border-top: 1px solid #fff; line-height: 16px; white-space: nowrap; overflow: hidden; }
.grows { display: grid; grid-auto-rows: 1fr; height: 223px; margin-top: 3px; }
.grow { display: grid; grid-template-columns: 16px 262px 112px 76px 1fr; column-gap: 5px; align-items: start; }
.grow .combo, .opts .combo { height: 17px; padding: 0; line-height: 15px; background-color: #fff; min-width: 0; }
.grow .combo.sel { color: #fff; background-image: linear-gradient(#0078d7, #0078d7), url("data:image/svg+xml,%3Csvg xmlns='http://www.w3.org/2000/svg' width='18' height='18'%3E%3Cpath d='M1 1h16v16H1z' fill='%23e1e1e1' stroke='%23adadb0' stroke-width='2'/%3E%3Cpath d='M5.500 8l4 4 4-4' fill='none' stroke='%23555' stroke-width='1.500'/%3E%3C/svg%3E"); background-position: 1px 1px, right center; background-size: 91px 13px, auto; }
.grow input { margin-left: 15px; margin-top: 2px; }
.lower { display: flex; gap: 28px; margin-top: 3px; }
.opts { width: 219px; margin-left: 4px; }
.line { display: flex; align-items: center; height: 22px; white-space: nowrap; }
.line .combo { width: 115px; margin-left: auto; }
.chk { display: flex; align-items: center; gap: 6px; }
.chk + label { margin-left: 9px; }
.off { color: #838383; }
.spin { display: flex; align-items: center; width: 48px; height: 15px; margin-left: auto; margin-right: 2px; border: 1px solid #999; background: #fff; }
.spin input { width: 31px; text-align: right; padding-right: 1px; height: 13px; }
.spin svg { width: 15px; height: 13px; }
.moves { display: flex; gap: 16px; padding-top: 13px; }
.btn { width: 66px; height: 23px; justify-content: center; background: #e1e1e1; border: 1px solid #adadad; }
.dfoot { flex: 1; display: flex; align-items: center; padding: 0 16px 4px 15px; }
.dfoot .btn { margin-top: 10px; }
.tight { gap: 2px; margin-right: auto; }
.dfoot .apply { margin-right: 30px; }
.dfoot .ok { border: 2px solid #0078d7; margin-right: 13px; }
.marker { position: absolute; left: 7px; top: 76px; width: 411px; height: 28px; border: 4px solid #3b46ee; border-radius: 5px; }
.cursor { position: absolute; width: 20px; height: 28px; }
.c1 { left: 139px; top: 70px; }
.c2 { left: 416px; top: 95px; }
```
FILE: app.js
```js
// Each activity: id, description, early start, early finish, duration.
const activities = [
  ["2", "Fase 2 - Prosjektering", "14.Jan.2021", "26.Dec.2027", "2538"],
  ["2.2", "Aktiviteter som utgår", "03.Jan.2022", "20.Oct.2023", "656"],
  ["2.A.Felles", "Gjennomføringsavtaler #2 - Felles", "14.Jan.2021", "05.Aug.2022", "357"],
  ["2.A.K201-3A", "Gjennomføringsavtaler #1 - K201 3A: Råb", "01.Nov.2021", "15.Mar.2022", "92"],
  ["2.A.K201-3B", "Gjennomføringsavtaler #1 - K201 3B:Klima", "22.Nov.2021", "30.May.2022", "190"],
  ["2.A.K202", "Gjennomføringsavtaler #2 - K202", "14.Jan.2021", "30.May.2022", "502"],
  ["2.A.K301", "Gjennomføringsavtaler #2 - K301", "14.Jan.2021", "30.May.2022", "323"],
  ["2.A.K302", "Gjennomføringsavtaler #2 - K302", "01.Nov.2021", "30.Sep.2022", "210"],
  ["2.A.K401", "Gjennomføringsavtaler #2 - K401", "01.Nov.2021", "23.Aug.2022", "182"],
  ["2.A.K502", "Gjennomføringsavtaler #2 - K502", "01.Nov.2021", "19.Aug.2022", "180"],
  ["2.A.K701", "Gjennomføringsavtaler #2 - K701", "08.Nov.2021", "16.Dec.2022", "260"],
  ["2.A1", "Tidlig gjennomføringsavtale #1", "01.Nov.2021", "10.Dec.2021", "30"],
  ["2.A2", "Tidlige gjennomføringsavtaler #2", "07.Jun.2021", "06.Jan.2023", "360"],
  ["2.An-BUT", "Anskaffelsesplan BUT LVB", "14.Jan.2021", "20.Dec.2024", "902"],
  ["2.Fjernet-Prog", "Programmering - Romfunksjonsprogram (R", "14.Jan.2021", "18.Apr.2023", "825"],
  ["2.Fjernet-Pro-I", "Detaljprosjektering - Innvendige arbeider (i", "21.Mar.2022", "05.Dec.2025", "1356"],
  ["2.Fjernet-Pro-Styr", "Prosjektstyring Prosjektering", "15.Mar.2022", "05.Jul.2022", "71"],
  ["2.HF", "Hovedfremdriftsplan", "14.Jan.2021", "26.Dec.2027", "2538"],
  ["2.Pro-B", "Detaljprosjektering - Grunn, Fundament, R", "14.Jan.2021", "02.Feb.2024", "1115"],
  ["2.Pro-CS", "Detaljprosjektering - Klimaskall", "14.Jan.2021", "27.Sep.2024", "1353"],
  ["2.Pro-Inn", "Detaljprosjektering - Innvendige arbeider", "14.Jan.2021", "01.Jul.2026", "1995"],
  ["2.Pro-KS", "Detaljprosjektering - Klimaskall", "03.May.2021", "09.Jun.2023", "485"],
  ["2.Pro-L", "Detaljprosjektering - Landskap", "14.Jan.2021", "29.Sep.2023", "989"],
  ["2.Pro-ROS", "Risiko- og sårbarhetsanalyser (ROS)", "29.Jan.2021", "01.Oct.2022", "611"],
  ["2.Pro-SLV", "Avsluttes: SLV Innvendig", "08.Mar.2021", "09.Dec.2022", "642"],
  ["2.Untitled", "Untitled", "14.Jan.2021", "27.Jan.2021", "10"],
  ["3", "Fase 3 - Råbygg", "15.Jan.2021", "22.May.2026", "1954"],
  ["3.3A", "Fase 3A: Råbygg", "15.Jan.2021", "28.Feb.2025", "1506"],
  ["3.3B", "Fase 3B: Fasade og tak", "15.Jan.2021", "22.May.2026", "1954"],
  ["3.5", "Fase 5: Landskap", "14.Aug.2023", "13.Sep.2024", "397"],
  ["3.Untitled", "Untitled", "09.Aug.2021", "14.Oct.2022", "284"],
  ["4", "Fase 4 - Innvendig", "29.Apr.2022", "08.Jan.2027", "1716"],
  ["4.FA", "Funksjonsarealer", "29.Apr.2022", "14.Dec.2026", "1691 d"],
  ["4.GJ", "Gjennomføringsavtaler, oppstart prosjekter", "06.Jun.2022", "19.May.2023", "220 d"],
  ["4.K1", "Tekniske rom - K1", "29.Apr.2022", "31.Jul.2026", "1555 d"],
  ["4.K3", "Tekniske rom - K3", "29.Apr.2022", "08.May.2026", "1471 d"],
  ["4.LA", "Landskap", "29.Apr.2022", "08.Jan.2027", "1716 d"],
  ["4.PG", "Prosjekteringsplan Innvendig", "01.Aug.2022", "28.Mar.2025", "971 d"],
  ["4.PG-alt", "Prosjekteringsplan Asplan Viak", "29.Apr.2022", "05.Jan.2023", "150 d"],
  ["4.SJ", "Tekniske sjakter", "29.Apr.2022", "12.Sep.2025", "1233 d"],
  ["4.SJ2", "Heis- og trappesjakter", "29.Apr.2022", "23.Oct.2026", "1639 d"],
  ["4.TP", "Tekniske rom - Plan 1, 2, 5", "29.Apr.2022", "14.Aug.2026", "1569 d"],
  ["4.TR", "Transportåpninger - Logistikk", "29.Apr.2022", "08.Jan.2027", "1716 d"],
  ["6", "Fase 6 - Ibruktakelse", "02.Sep.2024", "18.Aug.2028", "1447"]
];

const months = ["Jan", "Feb", "Mar", "Apr", "May", "Jun", "Jul", "Aug", "Sep", "Oct", "Nov", "Dec"];
const origin = Date.UTC(2021, 0, 1);
const dayWidth = 0.4717;
const offset = 8;
const rowHeight = 19;
const xOf = time => Math.round(offset + (time - origin) / 86400000 * dayWidth);
const parse = text => {
  const [day, month, year] = text.split(".");
  return Date.UTC(+year, months.indexOf(month), +day);
};

document.getElementById("rows").innerHTML = activities.map(([id, desc, start, finish, dur]) => {
  const phase = !id.includes(".");
  const open = phase && id !== "6";
  const sign = open ? "M2 4.500h5" : "M2 4.500h5M4.500 2v5";
  return `<tr class="${phase ? "phase" : "child"}"><td><svg class="exp" viewBox="0 0 9 9"><path d="M.5.500h8v8h-8z" fill="#fff" stroke="#808080"/><path d="${sign}" stroke="#000"/></svg></td>` +
    `<td>${id}</td><td>${desc}</td><td class="mid">${start}</td><td class="mid">${finish}</td><td class="num">${dur}</td></tr>`;
}).join("");

// Time scale: a sliver of 2020 shows before the first full year.
let years = `<span style="width:${offset}px">2</span>`;
let quarters = `<span style="width:${offset}px">Q</span>`;
let shapes = "";
for (let y = 2021; y < 2029; y++) {
  years += `<span style="width:${xOf(Date.UTC(y + 1, 0, 1)) - xOf(Date.UTC(y, 0, 1))}px">${y}</span>`;
  for (let q = 0; q < 4; q++) {
    const x = xOf(Date.UTC(y, q * 3, 1));
    quarters += `<span style="width:${xOf(Date.UTC(y, q * 3 + 3, 1)) - x}px">Q${q + 1} ${y % 100}</span>`;
    shapes += `<rect x="${x}" y="0" width="1" height="100%" fill="#c0c0c0"/>`;
  }
}
document.getElementById("years").innerHTML = years;
document.getElementById("quarters").innerHTML = quarters;

shapes += `<rect x="14" width="2" height="100%" fill="#f00"/><rect x="236" width="1" height="100%" fill="#f00"/><rect x="639" width="1" height="100%" fill="#f00"/>`;
activities.forEach(([, , start, finish], i) => {
  const a = xOf(parse(start)), b = xOf(parse(finish)) + 1, y = i * rowHeight + 2;
  shapes += `<path d="M${a - 6} ${y}H${b + 6}V${y + 8}L${b} ${y + 14}L${b - 6} ${y + 8}V${y + 7}H${a + 6}V${y + 8}L${a} ${y + 14}L${a - 6} ${y + 8}z"/>`;
});
document.getElementById("plot").innerHTML = shapes;

const grouping = [["Outline Code 29 Felles WBS (Outline Code 29)", "All Levels", "Short"]];
let html = "";
for (let n = 1; n <= 10; n++) {
  const [field, level, sort] = grouping[n - 1] || ["", "", ""];
  html += `<div class="grow"><span>${n}</span>` +
    `<select class="combo" aria-label="Group field ${n}"><option>${field}</option></select>` +
    `<select class="combo${level ? " sel" : ""}" aria-label="Level ${n}"><option>${level}</option></select>` +
    `<select class="combo" aria-label="Sort on ${n}"><option>${sort}</option></select>` +
    (n === 1 ? `<input type="checkbox" aria-label="Page break 1">` : "") + `</div>`;
}
document.getElementById("grows").innerHTML = html;
```
